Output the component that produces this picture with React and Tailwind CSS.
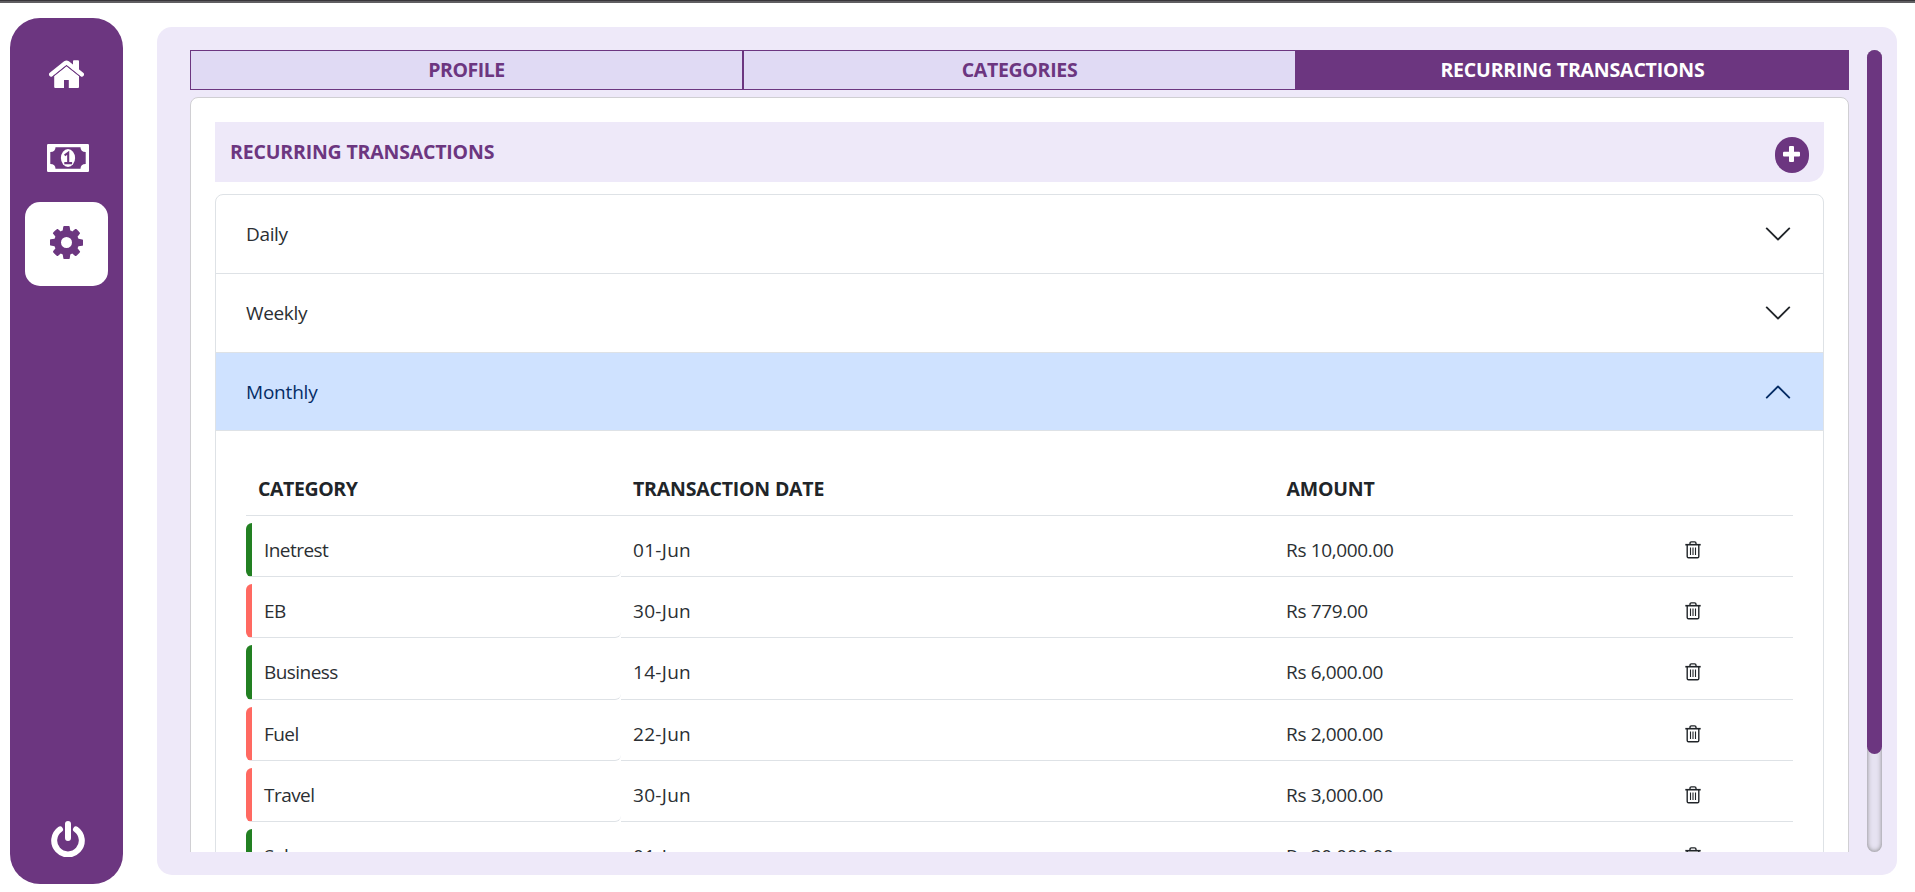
const rows = [
  { name: "Inetrest", date: "01-Jun", amount: "Rs 10,000.00", income: true },
  { name: "EB", date: "30-Jun", amount: "Rs 779.00", income: false },
  { name: "Business", date: "14-Jun", amount: "Rs 6,000.00", income: true, tall: true },
  { name: "Fuel", date: "22-Jun", amount: "Rs 2,000.00", income: false },
  { name: "Travel", date: "30-Jun", amount: "Rs 3,000.00", income: false },
  { name: "Salary", date: "01-Jun", amount: "Rs 30,000.00", income: true },
];

function HomeIcon() {
  return (
    <svg width="35" height="28" viewBox="0 0 35 28" fill="#fff">
      <path d="M24 1.2q0-.9.9-.9h4.2q.9 0 .9.9V12l-6-4.6z" />
      <path d="M2.1 14.5 16.4 3q1.1-.8 2.2 0L32.9 14.5" fill="none" stroke="#fff" strokeWidth="4.2" strokeLinecap="round" />
      <path d="M5.2 16 17.5 6.2 30 16v11q0 1-1 1h-9.2v-8H15v8H6.200q-1 0-1-1z" />
      <path d="M3.600 16.900 17.500 5.700 31.400 16.900" fill="none" stroke="#6c3680" strokeWidth="0.8" />
    </svg>
  );
}

function MoneyIcon() {
  return (
    <svg width="42" height="28" viewBox="0 0 42 28" className="ml-0.5 mt-1 mb-1">
      <rect width="42" height="28" rx="1.2" fill="#fff" />
      <path d="M8.500 3.300h25q0 4.700 5.200 4.700v12q-5.200 0-5.200 4.700h-25q0-4.700-5.200-4.700V8q5.200 0 5.200-4.700z" fill="#6c3680" />
      <ellipse cx="21" cy="14" rx="7.100" ry="9" fill="#fff" />
      <path d="M17.600 11.300 21.200 8.800V19M17.300 19.100h7.800" fill="none" stroke="#6c3680" strokeWidth="2.100" />
    </svg>
  );
}

function GearIcon() {
  return (
    <svg width="33" height="33" viewBox="128 128 1536 1536" fill="#6c3680" className="-mt-[3px]">
      <path d="M1152 896q0-106-75-181t-181-75-181 75-75 181 75 181 181 75 181-75 75-181zm512-109v222q0 12-8 23t-20 13l-185 28q-19 54-39 91 35 50 107 138 10 12 10 25t-9 23q-27 37-99 108t-94 71q-12 0-26-9l-138-108q-44 23-91 38-16 136-29 186-7 28-36 28h-222q-14 0-24.5-8.5t-11.5-21.5l-28-184q-49-16-90-37l-141 107q-10 9-25 9-14 0-25-11-126-114-165-168-7-10-7-23 0-12 8-23 15-21 51-66.5t54-70.5q-27-50-41-99l-183-27q-13-2-21-12.5t-8-23.5v-222q0-12 8-23t19-13l186-28q14-46 39-92-40-57-107-138-10-12-10-24 0-10 9-23 26-36 98.5-107.5t94.5-71.5q13 0 26 10l138 107q44-23 91-38 16-136 29-186 7-28 36-28h222q14 0 24.5 8.5t11.5 21.5l28 184q49 16 90 37l142-107q9-9 24-9 13 0 25 10 129 119 165 170 7 8 7 22 0 12-8 23-15 21-51 66.5t-54 70.5q26 50 41 98l183 28q13 2 21 12.5t8 23.5z" />
    </svg>
  );
}

function PowerIcon() {
  return (
    <svg width="34" height="36" viewBox="0 0 34 36" fill="none" stroke="#fff" strokeWidth="6" strokeLinecap="round">
      <path d="M9 8.400a13.800 13.800 0 1 0 16 0M17 3v14" />
    </svg>
  );
}

function TrashIcon() {
  return (
    <svg width="16" height="18" viewBox="0 0 16 18" fill="none" stroke="#212529">
      <path d="M5 3.500V2.300Q5 .9 6.400.9h3.200Q11 .9 11 2.300v1.200" strokeWidth="1.400" />
      <path d="M.3 3.700h15.400" strokeWidth="1.600" />
      <path d="M2.200 4v11.500q0 1.300 1.300 1.300h9q1.300 0 1.300-1.300V4" strokeWidth="1.400" />
      <path d="M5.500 6.500v7.500M8 6.500v7.500M10.500 6.500v7.500" strokeWidth="1.100" />
    </svg>
  );
}

function Chevron({ color, up }) {
  return (
    <svg width="30" height="30" viewBox="0 0 16 16" fill={color} className={up ? "rotate-180" : ""}>
      <path fillRule="evenodd" d="M1.646 4.646a.5.5 0 0 1 .708 0L8 10.293l5.646-5.647a.5.5 0 0 1 .708.708l-6 6a.5.5 0 0 1-.708 0l-6-6a.5.5 0 0 1 0-.708z" />
    </svg>
  );
}

function Sidebar() {
  return (
    <nav className="ml-[10px] mt-[15px] flex h-[866px] w-[113px] shrink-0 flex-col items-center rounded-[30px] bg-[#6c3680] pt-4 pb-[27px]">
      <div className="flex h-[84px] w-[83px] items-center justify-center pb-1"><HomeIcon /></div>
      <div className="flex h-[84px] w-[83px] items-center justify-center pb-1"><MoneyIcon /></div>
      <div className="flex h-[84px] w-[83px] items-center justify-center rounded-[15px] bg-white"><GearIcon /></div>
      <div className="mt-auto ml-[3px]"><PowerIcon /></div>
    </nav>
  );
}

const tabBase = "flex h-10 flex-1 items-center justify-center border border-[#6c3680] font-bold text-[19.5px]";

export default function App() {
  return (
    <div className="h-[892px] w-[1915px] overflow-hidden bg-white font-['Open_Sans',sans-serif] text-[19px] tracking-[-0.35px] text-[#2b2f33]">
      <div className="h-[3px] border-t border-[#38363a] bg-[#605e62]" />
      <div className="flex">
        <Sidebar />
        <main className="mt-6 ml-[34px] flex h-[848px] w-[1740px] rounded-[15px] bg-[#eee9f9] pt-[23px] pr-[15px] pb-[23px] pl-[33px]">
          <div className="h-[802px] w-[1659px] overflow-hidden">
            <div className="flex">
              <div className={`${tabBase} tracking-[-0.45px] bg-[#e0daf4] text-[#6c3680]`}>PROFILE</div>
              <div className={`${tabBase} tracking-[-0.3px] bg-[#e0daf4] text-[#6c3680]`}>CATEGORIES</div>
              <div className={`${tabBase} tracking-[-0.18px] bg-[#6c3680] text-white`}>RECURRING TRANSACTIONS</div>
            </div>
            <section className="mt-[7px] h-[900px] rounded-lg border border-[#d0cfd3] bg-white px-6 pt-6">
              <header className="flex h-[60px] items-center justify-between rounded-br-[15px] bg-[#eee9f9] pr-[15px] pl-[15px]">
                <h2 className="text-[19.5px] font-bold tracking-[-0.18px] text-[#6c3680]">RECURRING TRANSACTIONS</h2>
                <button className="mt-[6px] flex h-9 w-[34px] items-center justify-center rounded-full bg-[#6c3680]">
                  <svg width="17" height="16" viewBox="0 0 17 16" fill="#fff" className="-mt-0.5 -ml-px">
                    <rect x="6" width="5" height="16" rx="1" />
                    <rect y="5.800" width="17" height="4.600" rx="1" />
                  </svg>
                </button>
              </header>
              <div className="mt-3 h-[800px] overflow-hidden rounded-lg border border-[#dee2e6]">
                <div className="flex h-[79px] items-center justify-between border-b border-[#dee2e6] pr-[30px] pl-[30px]">
                  Daily<Chevron color="#212529" />
                </div>
                <div className="flex h-[79px] items-center justify-between border-b border-[#dee2e6] pr-[30px] pl-[30px]">
                  Weekly<Chevron color="#212529" />
                </div>
                <div className="flex h-[78px] items-center justify-between border-b border-[#dee2e6] bg-[#cfe2ff] pr-[30px] pl-[30px] tracking-[-0.2px] text-[#052c65]">
                  <span className="pt-0.5">Monthly</span><Chevron color="#052c65" up />
                </div>
                <div className="pr-[30px] pl-[30px] pt-[30px]">
                  <div className="flex h-[55px] items-center border-b border-[#dee2e6] pt-0.5 text-[19.5px] font-bold tracking-[-0.2px] text-[#212529]">
                    <div className="w-[375px] pl-3 tracking-[-0.4px]">CATEGORY</div>
                    <div className="w-[653px] pl-3">TRANSACTION DATE</div>
                    <div className="pl-[12.500px]">AMOUNT</div>
                  </div>
                  {rows.map((r) => (
                    <div key={r.name} className={`mt-[7px] flex ${r.tall ? "h-[55px]" : "h-[54px] *:not-last:pt-0.5"}`}>
                      <div className={`flex w-[375px] items-center rounded-[6px] border-b border-l-[6px] border-b-[#dee2e6] pl-3 tracking-[-0.55px] ${r.income ? "border-l-[#228022]" : "border-l-[#ff6961]"}`}>{r.name}</div>
                      <div className="flex w-[653px] items-center border-b border-[#dee2e6] pl-3 tracking-[0.3px]">{r.date}</div>
                      <div className="flex w-[399px] items-center border-b border-[#dee2e6] pl-3">{r.amount}</div>
                      <div className="flex flex-1 items-center border-b border-[#dee2e6] pl-3"><TrashIcon /></div>
                    </div>
                  ))}
                </div>
              </div>
            </section>
          </div>
          <div className="ml-auto h-[802px] w-[15px] rounded-[10px] bg-[#e6e2f1] shadow-[inset_0_0_5px_#808080]">
            <div className="h-[704px] rounded-[10px] bg-[#6c3680]" />
          </div>
        </main>
      </div>
    </div>
  );
}
